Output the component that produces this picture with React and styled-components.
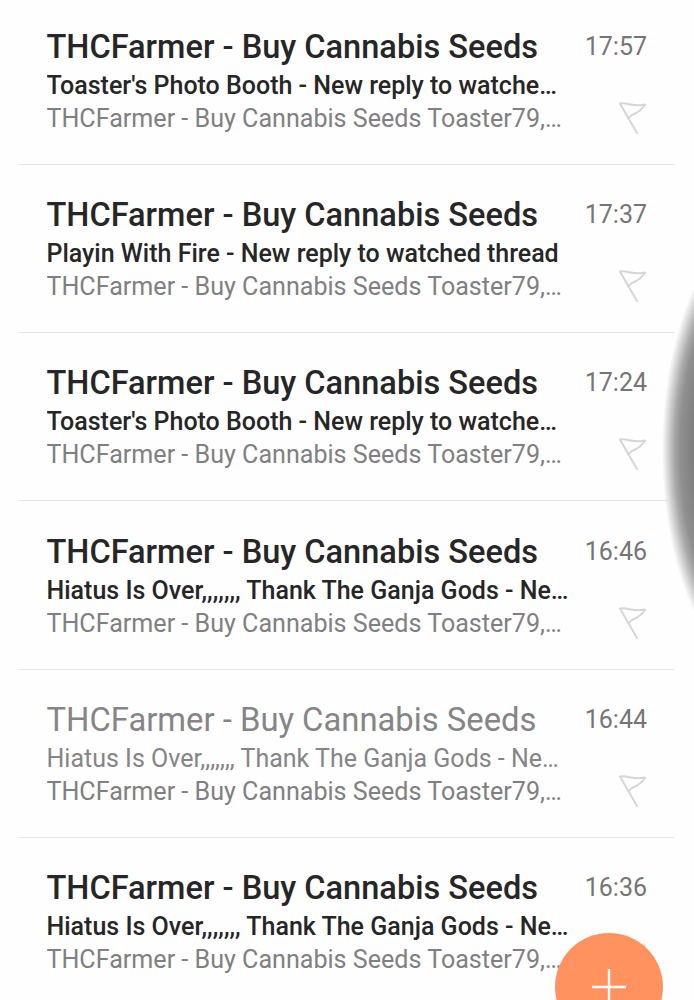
import React from "react";
import styled, { createGlobalStyle } from "styled-components";

const Global = createGlobalStyle`
  html, body { margin: 0; padding: 0; background: #fefefe; }
  body { font-family: Roboto, "Liberation Sans", sans-serif; }
`;

const Page = styled.div`
  position: relative;
  width: 694px;
  height: 1000px;
  overflow: hidden;
  background: #fefefe;
`;

const List = styled.ul`
  list-style: none;
  margin: 0;
  padding: 0 20px 0 19px;
`;

const Row = styled.li`
  display: flex;
  height: 168.2px;
  box-sizing: border-box;
  padding: 31.2px 27px 0 27.5px;
  border-bottom: 1px solid #e6e6e6;
  &:first-child { height: 165px; padding-top: 28px; }
  &:last-child { border-bottom: 0; }
`;

const Content = styled.div`
  flex: none;
  width: 523px;
  color: ${p => (p.$read ? "#858585" : "#262626")};
`;

const Title = styled.div`
  font-size: ${p => (p.$read ? "32.8px" : "32.55px")};
  line-height: 38px;
  font-weight: ${p => (p.$read ? 400 : 500)};
  white-space: nowrap;
`;

const Subject = styled.div`
  margin-top: 3px;
  font-size: 25px;
  line-height: 33px;
  font-weight: ${p => (p.$read ? 400 : 500)};
  white-space: nowrap;
  overflow: hidden;
  text-overflow: ellipsis;
`;

const Preview = styled.div`
  font-size: 25.1px;
  line-height: 33px;
  color: #808080;
  white-space: nowrap;
  overflow: hidden;
  text-overflow: ellipsis;
  width: 516px;
`;

const Side = styled.div`
  display: flex;
  flex-direction: column;
  align-items: flex-end;
  justify-content: space-between;
  flex: 1;
  height: 107px;
`;

const Time = styled.div`
  font-size: 25px;
  line-height: 38px;
  color: #757575;
`;

const FlagIcon = styled.svg`
  display: block;
  width: 30px;
  height: 34px;
`;

const Shade = styled.div`
  position: absolute;
  left: 662px;
  top: 210px;
  width: 240px;
  height: 480px;
  border-radius: 50%;
  background: radial-gradient(ellipse closest-side at center, #7a7a7a 0%, #7e7e7e 74%, #909090 85%, #aaaaaa 90%, #dcdcdc 96%, rgba(255,255,255,0) 100%);
`;

const Fab = styled.button`
  position: absolute;
  left: 555px;
  top: 933px;
  width: 108px;
  height: 108px;
  padding: 0;
  border: 0;
  border-radius: 50%;
  background: #ff925e;
  display: flex;
  align-items: center;
  justify-content: center;
`;

const Plus = styled.svg`
  display: block;
  width: 36px;
  height: 36px;
`;

const Flag = () => (
  <FlagIcon viewBox="0 0 30 34" fill="none" stroke="#d6d6d6" strokeWidth="2" strokeLinecap="round" strokeLinejoin="round">
    <path d="M20 32 L3 2.5 C10 1 17 6.5 28 3.5 C25 9 20 12 15 14 C14 15 13 16 11 17" />
  </FlagIcon>
);

const SENDER = "THCFarmer - Buy Cannabis Seeds";
const PREVIEW = "THCFarmer - Buy Cannabis Seeds Toaster79, a new reply was posted";
const HIATUS = "Hiatus Is Over,,,,,,, Thank The Ganja Gods - New reply to watched thread";
const BOOTH = "Toaster's Photo Booth - New reply to watched thread";

const mails = [
  { time: "17:57", subject: BOOTH },
  { time: "17:37", subject: "Playin With Fire - New reply to watched thread" },
  { time: "17:24", subject: BOOTH },
  { time: "16:46", subject: HIATUS },
  { time: "16:44", subject: HIATUS, read: true },
  { time: "16:36", subject: HIATUS },
];

export default function App() {
  return (
    <Page>
      <Global />
      <List>
        {mails.map((m, i) => (
          <Row key={i}>
            <Content $read={m.read}>
              <Title $read={m.read}>{SENDER}</Title>
              <Subject $read={m.read}>{m.subject}</Subject>
              <Preview>{PREVIEW}</Preview>
            </Content>
            <Side>
              <Time>{m.time}</Time>
              <Flag />
            </Side>
          </Row>
        ))}
      </List>
      <Shade />
      <Fab aria-label="Compose">
        <Plus viewBox="0 0 36 36" stroke="#fff" strokeWidth="2.4">
          <path d="M18 0 V36 M1 18 H35" />
        </Plus>
      </Fab>
    </Page>
  );
}
